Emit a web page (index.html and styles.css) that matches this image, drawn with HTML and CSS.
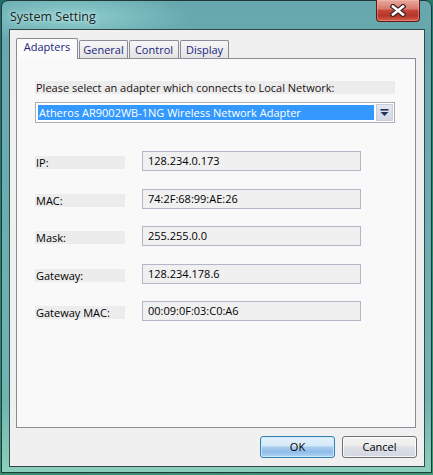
FILE: index.html
```html
<!DOCTYPE html>
<html>
<head>
<meta charset="utf-8">
<title>System Setting</title>
<link rel="stylesheet" href="styles.css">
</head>
<body>
<div class="window">
  <div class="titlebar">
    <span class="title">System Setting</span>
    <div class="close">
      <svg width="16" height="13" viewBox="0 0 16 13">
        <path d="M3 2.5 L13 10.5 M13 2.5 L3 10.5" stroke="#3b2323" stroke-width="5" stroke-linecap="square" fill="none"/>
        <path d="M3 2.5 L13 10.5 M13 2.5 L3 10.5" stroke="#ffffff" stroke-width="2.6" stroke-linecap="square" fill="none"/>
      </svg>
    </div>
  </div>
  <div class="client">
    <div class="tabs">
      <div class="tab active w-adapters">Adapters</div>
      <div class="tab w-general">General</div>
      <div class="tab w-control">Control</div>
      <div class="tab w-display">Display</div>
    </div>
    <div class="panel">
      <div class="prompt">Please select an adapter which connects to Local Network:</div>
      <div class="combo">
        <span class="combo-value">Atheros AR9002WB-1NG Wireless Network Adapter</span>
        <span class="combo-btn">
          <svg width="9" height="7" viewBox="0 0 9 7">
            <rect x="0.5" y="0" width="8" height="1.6" fill="#1d3556"/>
            <path d="M0.5 3 L8.5 3 L4.5 7 Z" fill="#1d3556"/>
          </svg>
        </span>
      </div>
      <div class="fields">
        <div class="row"><span class="lbl">IP:</span><span class="val">128.234.0.173</span></div>
        <div class="row"><span class="lbl">MAC:</span><span class="val">74:2F:68:99:AE:26</span></div>
        <div class="row"><span class="lbl">Mask:</span><span class="val">255.255.0.0</span></div>
        <div class="row"><span class="lbl">Gateway:</span><span class="val">128.234.178.6</span></div>
        <div class="row"><span class="lbl">Gateway MAC:</span><span class="val">00:09:0F:03:C0:A6</span></div>
      </div>
    </div>
    <div class="buttons">
      <div class="btn btn-ok">OK</div>
      <div class="btn">Cancel</div>
    </div>
  </div>
</div>
</body>
</html>
```

FILE: styles.css
```css
* { box-sizing: border-box; }
html, body { margin: 0; padding: 0; }
body {
  width: 433px;
  height: 475px;
  overflow: hidden;
  background: linear-gradient(160deg, #1f6e6a 0%, #2a8a6e 60%, #3a9a72 100%);
  font-family: "Open Sans", "Noto Sans", sans-serif;
  font-size: 11px;
  color: #000;
}
.window {
  margin-left: 1px;
  width: 431px;
  height: 473px;
  border: 1px solid #22393b;
  border-radius: 7px 7px 0 0;
  background:
    radial-gradient(ellipse 120px 26px at 70px 16px, rgba(170, 232, 230, 0.6), rgba(170, 232, 230, 0) 100%),
    linear-gradient(to bottom, #66a8ad 0%, #6aadb1 40%, #70b4b2 85%, #8ccfba 100%);
  display: flex;
  flex-direction: column;
  padding: 0 6px 5px 7px;
}
.titlebar {
  height: 28px;
  display: flex;
  justify-content: space-between;
  align-items: flex-start;
  padding-left: 1px;
  margin-right: 5px;
}
.title {
  margin-top: 7px;
  font-size: 12.5px;
  line-height: 17px;
  color: #141c1c;
  text-shadow: 0 0 6px rgba(230, 250, 250, 0.8), 0 0 2px rgba(230, 250, 250, 0.6);
}
.close {
  margin-top: -1px;
  width: 44px;
  height: 22px;
  border: 1px solid #5c1c16;
  border-top: none;
  border-radius: 0 0 4px 4px;
  background: linear-gradient(to bottom, #e9aaa0 0%, #d9796c 42%, #c4463a 50%, #b83428 75%, #d4604e 100%);
  box-shadow: inset 0 0 0 1px rgba(255, 200, 190, 0.35);
  display: flex;
  align-items: center;
  justify-content: center;
}
.close svg { display: block; }
.client {
  flex: 1;
  border: 1px solid #34484c;
  background: #f0f0f0;
  display: flex;
  flex-direction: column;
  padding: 8px 7px 8px 6px;
}
.tabs {
  height: 20px;
  display: flex;
  align-items: flex-end;
  gap: 1px;
}
.tab {
  height: 18px;
  border: 1px solid #898c95;
  border-bottom: none;
  border-radius: 2px 2px 0 0;
  background: linear-gradient(to bottom, #f6f6f6, #e4e4e4);
  color: #1b1f7e;
  font-size: 11px;
  line-height: 15px;
  padding-top: 1px;
  text-align: center;
}
.tab.active {
  height: 21px;
  margin-bottom: -1px;
  padding-top: 0;
  background: #fbfbfb;
  position: relative;
  z-index: 1;
}
.w-adapters { width: 62px; }
.w-general { width: 49px; }
.w-control { width: 50px; }
.w-display { width: 49px; }
.panel {
  height: 370px;
  margin-right: 1px;
  border: 1px solid #898c95;
  background: #f9f9f9;
  padding: 22px 0 0 18px;
}
.prompt {
  width: 360px;
  height: 13px;
  background: #ececec;
  line-height: 13px;
  padding-left: 1px;
  white-space: nowrap;
  color: #1a1010;
}
.combo {
  margin-top: 8px;
  width: 360px;
  height: 21px;
  border: 1px solid #abadb3;
  background: #ffffff;
  display: flex;
  padding: 2px 1px 2px 2px;
  gap: 2px;
}
.combo-value {
  flex: 1;
  background: #3399ff;
  color: #ffffff;
  font-size: 11px;
  line-height: 15px;
  padding-left: 1px;
  white-space: nowrap;
  overflow: hidden;
}
.combo-btn {
  width: 17px;
  margin: -1px 0;
  background: linear-gradient(to bottom, #e4e7ef, #d3d7e3);
  border: 1px solid #c9cdd9;
  display: flex;
  align-items: center;
  justify-content: center;
}
.combo-btn svg { display: block; }
.fields {
  margin-top: 28px;
  display: grid;
  grid-template-columns: 90px 219px;
  column-gap: 17px;
  row-gap: 17.5px;
}
.row { display: contents; }
.lbl {
  margin-top: 5px;
  height: 13px;
  background: #ececec;
  line-height: 13px;
  padding-left: 1px;
  white-space: nowrap;
}
.val {
  height: 20px;
  border: 1px solid #b3b5c8;
  background: #f0f0f0;
  line-height: 17px;
  padding-left: 5px;
  white-space: nowrap;
}
.buttons {
  margin-top: 8px;
  height: 22px;
  display: flex;
  justify-content: flex-end;
  gap: 7px;
}
.btn {
  width: 75px;
  height: 22px;
  border: 1px solid #707070;
  border-radius: 3px;
  background: linear-gradient(to bottom, #f4f4f4 0%, #ececec 45%, #dcdfe6 50%, #d4d8e4 100%);
  box-shadow: inset 0 0 0 1px rgba(255, 255, 255, 0.8);
  font-size: 11px;
  line-height: 19px;
  text-align: center;
  color: #000;
}
.btn-ok {
  border-color: #3c7fb1;
  background: linear-gradient(to bottom, #e6f2fb 0%, #d3e8f8 45%, #a9cdef 50%, #8fbce8 75%, #b4d6f4 100%);
  box-shadow: inset 0 0 0 1px rgba(200, 235, 255, 0.9);
}
```
